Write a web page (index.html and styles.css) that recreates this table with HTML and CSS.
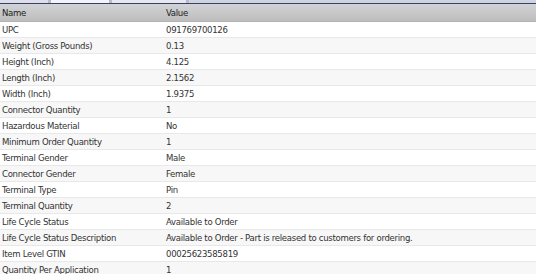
FILE: index.html
```html
<!DOCTYPE html>
<html>
<head>
<meta charset="utf-8">
<link rel="stylesheet" href="styles.css">
</head>
<body>
<div class="tabs">
  <div class="tab t1"></div>
  <div class="tab t2"></div>
  <div class="tab t3"></div>
  <div class="tab t4"></div>
</div>
<div class="grid">
  <div class="row head"><div class="c1">Name</div><div class="c2">Value</div></div>
  <div class="row"><div class="c1">UPC</div><div class="c2">091769700126</div></div>
  <div class="row alt"><div class="c1">Weight (Gross Pounds)</div><div class="c2">0.13</div></div>
  <div class="row"><div class="c1">Height (Inch)</div><div class="c2">4.125</div></div>
  <div class="row alt"><div class="c1">Length (Inch)</div><div class="c2">2.1562</div></div>
  <div class="row"><div class="c1">Width (Inch)</div><div class="c2">1.9375</div></div>
  <div class="row alt"><div class="c1">Connector Quantity</div><div class="c2">1</div></div>
  <div class="row"><div class="c1">Hazardous Material</div><div class="c2">No</div></div>
  <div class="row alt"><div class="c1">Minimum Order Quantity</div><div class="c2">1</div></div>
  <div class="row"><div class="c1">Terminal Gender</div><div class="c2">Male</div></div>
  <div class="row alt"><div class="c1">Connector Gender</div><div class="c2">Female</div></div>
  <div class="row"><div class="c1">Terminal Type</div><div class="c2">Pin</div></div>
  <div class="row alt"><div class="c1">Terminal Quantity</div><div class="c2">2</div></div>
  <div class="row"><div class="c1">Life Cycle Status</div><div class="c2">Available to Order</div></div>
  <div class="row alt"><div class="c1">Life Cycle Status Description</div><div class="c2">Available to Order - Part is released to customers for ordering.</div></div>
  <div class="row"><div class="c1">Item Level GTIN</div><div class="c2">00025623585819</div></div>
  <div class="row alt"><div class="c1">Quantity Per Application</div><div class="c2">1</div></div>
</div>
</body>
</html>
```
FILE: styles.css
```css
html, body {
  margin: 0;
  padding: 0;
  background: #ffffff;
  overflow: hidden;
}
body {
  font-family: "DejaVu Sans Condensed", "DejaVu Sans", sans-serif;
  font-size: 9.5px;
  letter-spacing: -0.3px;
  color: #333333;
}
.tabs {
  display: flex;
  height: 3px;
  background: #dcdfe8;
  border-bottom: 1px solid #3a3f6a;
}
.tab { height: 3px; }
.t1 { width: 48px; background: #dcdfe8; border-right: 3px solid #b8bcc8; }
.t2 { width: 58px; background: #f2f4f8; border-right: 3px solid #b8bcc8; }
.t3 { width: 74px; background: #e6e8ee; border-right: 3px solid #b8bcc8; }
.t4 { flex: 1; background: #d0d4de; }
.grid { display: flex; flex-direction: column; }
.row {
  display: grid;
  grid-template-columns: 164px 1fr;
  height: 15px;
  border-bottom: 1px solid #e8e8e8;
  align-items: center;
  white-space: nowrap;
  background: #ffffff;
}
.row.alt { background: #f7f7f7; }
.row.head {
  height: 17px;
  border-bottom: 1px solid #b4b4b4;
  background: linear-gradient(#d2d3d6, #bdbdbd);
  color: #222;
}
.c1 { padding-left: 2px; }
.c2 { padding-left: 2px; }
```
